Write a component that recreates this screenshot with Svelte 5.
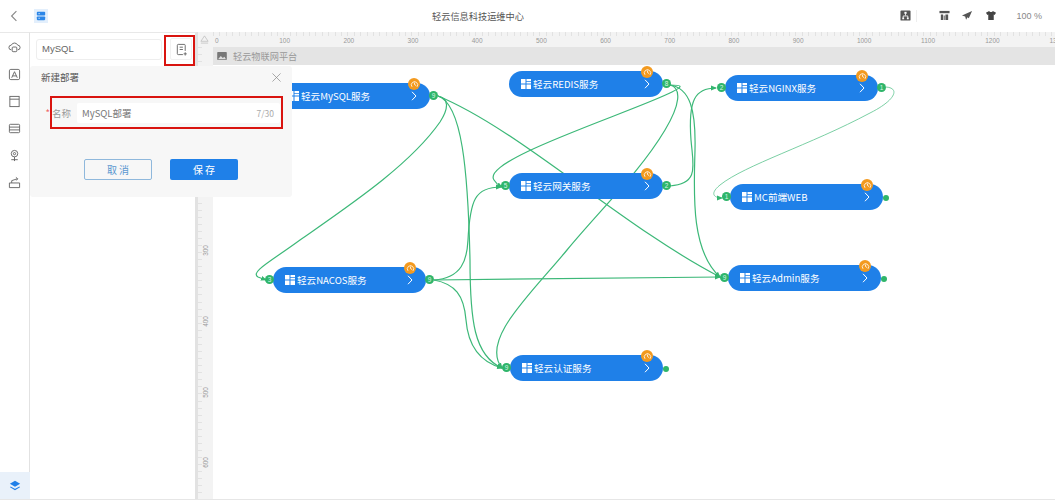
<script lang="ts">
	// page coordinates, the workspace svg uses the same ones through its viewBox
	const ORIGIN = { x: 198, y: 32 };
	const services = [
		{ name: '轻云MySQL服务', x: 277, y: 83, w: 153, inPort: null, outPort: '9' },
		{ name: '轻云REDIS服务', x: 509, y: 71, w: 154, inPort: null, outPort: '8' },
		{ name: '轻云NGINX服务', x: 725, y: 75, w: 153, inPort: '2', outPort: '1' },
		{ name: '轻云网关服务', x: 509, y: 173, w: 154, inPort: '5', outPort: '2' },
		{ name: 'MC前端WEB', x: 730, y: 184, w: 153, inPort: '1', outPort: '' },
		{ name: '轻云NACOS服务', x: 273, y: 267, w: 153, inPort: '3', outPort: '9' },
		{ name: '轻云Admin服务', x: 728, y: 265, w: 153, inPort: '9', outPort: '' },
		{ name: '轻云认证服务', x: 510, y: 355, w: 153, inPort: '9', outPort: '' }
	];
	const edges = [
		{ d: 'M438 96 C449 98 449 108 440 122 C410 165 350 205 300 240 C270 262 250 272 258 277 L266 280' },
		{ d: 'M438 96 C462 104 468 170 470 260 C470 320 474 356 502 368' },
		{ d: 'M438 96 C520 130 620 225 720 277' },
		{ d: 'M434 280 C462 278 467 260 468 240 C470 200 475 187 501 187' },
		{ d: 'M434 280 L720 277' },
		{ d: 'M434 280 C455 284 464 295 466 320 C468 345 480 362 502 368' },
		{ d: 'M670 85 C682 85 684 86 672 92 C630 113 480 160 494 180 C497 185 500 186 502 187' },
		{ d: 'M670 85 C682 88 680 105 665 130 C640 172 600 210 567 250 C530 295 480 340 502 368' },
		{ d: 'M670 85 C690 88 696 110 695 150 C694 190 690 250 720 277' },
		{ d: 'M670 186 C700 184 693 165 691 140 C688 100 695 88 716 88' },
		{ d: 'M886 87 C900 88 896 100 870 113 C810 145 745 165 720 185 C708 195 716 198 722 198', thin: true }
	];
	const ticksX = Array.from({ length: 14 }, (_, i) => i * 100);
	const ticksY = [100, 200, 300, 400, 500, 600];
</script>

<div class="app">
	<header class="topbar">
		<svg class="back" viewBox="0 0 10 14" width="8" height="12"><path d="M8 1 2 7l6 6" fill="none" stroke="#888" stroke-width="1.4" /></svg>
		<span class="logo">
			<svg viewBox="0 0 12 12" width="10" height="10"><rect x="1" y="1" width="10" height="4.5" rx="1" fill="#2b86e8" /><rect x="1" y="6.5" width="10" height="4.5" rx="1" fill="#2b86e8" /><path d="M3 3.2h1.5M3 8.7h1.5" stroke="#fff" /></svg>
		</span>
		<h1>轻云信息科技运维中心</h1>
		<div class="tools">
			<svg viewBox="0 0 12 12" width="11" height="11"><rect x="0.5" y="0.5" width="11" height="11" rx="1" fill="#555" /><path d="M6 4v2M3.500 9V6.500h5V9" fill="none" stroke="#fff" stroke-width=".9" /><rect x="4.800" y="2" width="2.400" height="2.200" fill="#fff" /><rect x="2.500" y="8.300" width="2" height="1.800" fill="#fff" /><rect x="7.500" y="8.300" width="2" height="1.800" fill="#fff" /></svg>
			<i class="divider"></i>
			<svg viewBox="0 0 12 12" width="11" height="11"><path d="M.5 1h11v2.500H.5z" fill="#555" /><path d="M2 5h2.500v6H2zM7 5h3v6H7z" fill="#555" /><path d="M5 6h1.500v5H5z" fill="#888" /></svg>
			<svg viewBox="0 0 12 12" width="12" height="11"><path d="M11.500 1 .5 6l3.500 1 1 3.500 1.500-2.500 1.500 1z" fill="#555" /></svg>
			<svg viewBox="0 0 12 12" width="12" height="11"><path d="M4 1 .5 3 2 5.500l1-.5v6h6V5l1 .5L11.500 3 8 1C7.500 2.500 4.500 2.500 4 1z" fill="#444" /></svg>
			<span class="zoom">100 %</span>
		</div>
	</header>

	<div class="body">
		<nav class="rail">
			<div class="rail__items">
				<svg viewBox="0 0 14 14" width="13" height="13"><path d="M3.500 9.500a2.500 2.500 0 0 1 0-5 3.800 3.800 0 0 1 7 0 2.500 2.500 0 0 1 0 5" fill="none" /><rect x="4.500" y="6.500" width="5" height="5" rx="1" fill="none" /></svg>
				<svg viewBox="0 0 14 14" width="13" height="13"><rect x="1.500" y="1.500" width="11" height="11" rx="1.500" fill="none" /><path d="M4 10.500 7 4l3 6.500M5 8.500h4" fill="none" /></svg>
				<svg viewBox="0 0 14 14" width="13" height="13"><rect x="2" y="1.500" width="10" height="11" fill="none" /><path d="M2 4.500h10" fill="none" /></svg>
				<svg viewBox="0 0 14 14" width="13" height="13"><rect x="1.500" y="2.500" width="11" height="9" rx="1" fill="none" /><path d="M1.500 5.500h11M1.500 8.500h11" fill="none" /></svg>
				<svg viewBox="0 0 14 14" width="13" height="13"><circle cx="7" cy="5" r="3.500" fill="none" /><circle cx="7" cy="5" r="1.200" fill="none" /><path d="M7 8.500V13M3.500 11.500h7" fill="none" /></svg>
				<svg viewBox="0 0 14 14" width="13" height="13"><path d="M1.500 7.500h11v5h-11zM4 7.500V5l6-2M8.500 1.500 10.500 3 9 4.800" fill="none" /></svg>
			</div>
			<div class="rail__active">
				<svg viewBox="0 0 14 14" width="12" height="12"><path d="M7 1 13 4.500 7 8 1 4.500z" fill="#1f7fe8" /><path d="M1.500 8 7 11.200 12.500 8" fill="none" stroke="#1f7fe8" stroke-width="1.300" /></svg>
			</div>
		</nav>

		<aside class="panel">
			<div class="search">
				<div class="search__input">MySQL</div>
				<button class="add" aria-label="新建部署">
					<svg viewBox="0 0 14 14" width="13" height="13"><path d="M8.500 12.500H3.500a1 1 0 0 1-1-1v-9a1 1 0 0 1 1-1h6.500a1 1 0 0 1 1 1v6M5 4.500h3.500M5 7h3.500M11 10v3.500M9.300 11.700h3.400" fill="none" stroke="#666" /></svg>
				</button>
			</div>
		</aside>

		<main class="workspace">
			<div class="ruler-x">
				<span class="corner">
					<svg viewBox="0 0 10 10" width="9" height="9"><path d="M5 1 9 7H1zM1 9h8" fill="none" stroke="#bbb" stroke-width=".8" /></svg>
				</span>
				{#each ticksX as t}
					<span class="tick-x">{t}</span>
				{/each}
			</div>
			<div class="stage">
				<div class="ruler-y">
					{#each ticksY as t}
						<span class="tick-y"><b>{t}</b></span>
					{/each}
				</div>
				<div class="canvas">
					<div class="canvas__title">
						<svg viewBox="0 0 12 10" width="10" height="8"><rect width="12" height="10" rx="1" fill="#777" /><path d="M1 9 4.500 5l2.500 2.500 2-1.500 2 3z" fill="#ddd" /></svg>
						轻云物联网平台
					</div>
				</div>
			</div>

			<svg class="edges" viewBox="{ORIGIN.x} {ORIGIN.y} 857 468">
				<defs>
					<marker id="arrow" markerWidth="6" markerHeight="6" refX="5" refY="3" orient="auto" markerUnits="userSpaceOnUse">
						<path d="M0 .5 6 3 0 5.500z" fill="#35b56f" />
					</marker>
				</defs>
				{#each edges as e}
					<path d={e.d} class:thin={e.thin} marker-end="url(#arrow)" />
				{/each}
			</svg>

			{#each services as s}
				<div class="node" style="left: {s.x - ORIGIN.x}px; top: {s.y - ORIGIN.y}px; width: {s.w}px">
					<svg class="node__icon" viewBox="0 0 10 10" width="10" height="10"><path d="M0 0h4.500v4.500H0zM5.500 0H10v2.200H5.500zM5.500 3H10v1.500H5.500zM0 5.500h4.500V10H0zM5.500 5.500H10V10H5.500z" fill="#fff" /></svg>
					<span class="node__name">{s.name}</span>
					<svg class="node__chevron" viewBox="0 0 6 10" width="6" height="10"><path d="M1 .8 5 5 1 9.200" fill="none" stroke="#fff" stroke-width="1" /></svg>
					<span class="clock">
						<svg viewBox="0 0 10 10" width="9" height="9"><path d="M2.200 7.500A3.500 3.500 0 1 1 7.800 7.500M5 2.800V5l1.800 1.200" fill="none" stroke="#fff" stroke-width=".9" /></svg>
					</span>
					{#if s.inPort !== null}
						<span class="port port--in">{s.inPort}</span>
					{/if}
					{#if s.outPort !== null}
						<span class="port port--out" class:port--plain={s.outPort === ''}>{s.outPort}</span>
					{/if}
				</div>
			{/each}
		</main>

		<section class="dialog">
			<div class="dialog__head">
				<span>新建部署</span>
				<svg viewBox="0 0 10 10" width="9" height="9"><path d="M.5.5l9 9M9.500.5l-9 9" stroke="#888" stroke-width=".8" /></svg>
			</div>
			<div class="field">
				<label for="deploy-name"><em>*</em> 名称</label>
				<div class="field__input" id="deploy-name">
					<span>MySQL部署</span>
					<small>7/30</small>
				</div>
			</div>
			<div class="dialog__actions">
				<button class="btn btn--ghost">取 消</button>
				<button class="btn btn--primary">保 存</button>
			</div>
		</section>

		<i class="mark mark--add"></i>
		<i class="mark mark--field"></i>
	</div>
</div>

<style>
	:global(body) {
		margin: 0;
		background: #fff;
	}

	.app {
		width: 1055px;
		height: 500px;
		overflow: hidden;
		display: flex;
		flex-direction: column;
		font-family: "Noto Sans CJK SC", "Liberation Sans", sans-serif;
		color: #666;
	}

	.topbar {
		height: 32px;
		flex: none;
		display: flex;
		align-items: center;
		padding: 0 0 1px 10px;
		box-sizing: border-box;
		position: relative;
		background: #fff;
	}

	.logo {
		margin-left: 16px;
		width: 14px;
		height: 14px;
		display: flex;
		align-items: center;
		justify-content: center;
		background: #e3effc;
	}

	.topbar h1 {
		position: absolute;
		left: 0;
		width: 956px;
		margin: 0;
		text-align: center;
		font-size: 9.2px;
		font-weight: 400;
		color: #555;
	}

	.tools {
		margin-left: auto;
		display: flex;
		align-items: center;
		gap: 11.5px;
		padding-right: 13px;
	}

	.divider {
		width: 1px;
		height: 12px;
		margin: 0 10px 0 -6px;
		background: #eee;
	}

	.zoom {
		margin-left: 8px;
		font-family: "Liberation Sans", sans-serif;
		font-size: 9px;
		color: #888;
	}

	.body {
		flex: 1;
		display: flex;
		position: relative;
		min-height: 0;
		border-bottom: 1px solid #e6e6e6;
	}

	.rail {
		width: 30px;
		flex: none;
		box-sizing: border-box;
		border-right: 1px solid #e2e2e2;
		border-top: 1px solid #e8e8e8;
		display: flex;
		flex-direction: column;
		justify-content: space-between;
	}

	.rail__items {
		display: flex;
		flex-direction: column;
		align-items: center;
		gap: 14px;
		padding-top: 8px;
	}

	.rail__items svg {
		stroke: #666;
		stroke-width: 1;
	}

	.rail__active {
		height: 27px;
		margin-right: -1px;
		background: #e9f1fa;
		display: flex;
		align-items: center;
		justify-content: center;
	}

	.panel {
		width: 168px;
		flex: none;
		box-sizing: border-box;
		border-top: 1px solid #e8e8e8;
		border-right: 3px solid #e2e2e2;
	}

	.search {
		display: flex;
		align-items: center;
		gap: 8px;
		padding: 5px 0 0 6px;
	}

	.search__input {
		width: 126px;
		height: 21px;
		box-sizing: border-box;
		padding-left: 5px;
		border: 1px solid #eee;
		border-radius: 3px;
		font-size: 9.5px;
		line-height: 17px;
		font-family: "Liberation Sans", sans-serif;
		color: #666;
	}

	.add {
		width: 22px;
		height: 22px;
		padding: 0;
		display: flex;
		align-items: center;
		justify-content: center;
		border: 1px solid #f1f1f1;
		border-radius: 2px;
		background: #fff;
	}

	.workspace {
		flex: 1;
		position: relative;
		min-width: 0;
		display: flex;
		flex-direction: column;
	}

	.ruler-x {
		height: 15px;
		flex: none;
		display: flex;
		background:
			repeating-linear-gradient(90deg, #e2e2e2 0 1px, transparent 1px 6.4px) 15px 0 / 100% 4px no-repeat,
			#f3f3f3;
	}

	.corner {
		width: 15px;
		flex: none;
		padding-left: 2px;
		box-sizing: border-box;
		line-height: 10px;
	}

	.tick-x {
		width: 64.2px;
		flex: none;
		box-sizing: border-box;
		padding: 4px 0 0 2px;
		font-size: 6.5px;
		line-height: 10px;
		color: #999;
		font-family: "Liberation Sans", sans-serif;
	}

	.stage {
		flex: 1;
		display: flex;
		min-height: 0;
	}

	.ruler-y {
		width: 15px;
		flex: none;
		display: flex;
		flex-direction: column;
		box-sizing: border-box;
		background:
			repeating-linear-gradient(180deg, #e2e2e2 0 1px, transparent 1px 7.07px) 0 0 / 4px 100% no-repeat,
			#f3f3f3;
	}

	.tick-y {
		height: 70.7px;
		flex: none;
		display: flex;
		align-items: flex-end;
		justify-content: center;
	}

	.tick-y b {
		writing-mode: vertical-rl;
		transform: rotate(180deg);
		font-weight: 400;
		font-size: 6.5px;
		line-height: 10px;
		margin-bottom: 3px;
		color: #999;
		font-family: "Liberation Sans", sans-serif;
	}

	.canvas {
		flex: 1;
		min-width: 0;
	}

	.canvas__title {
		height: 18px;
		display: flex;
		align-items: center;
		gap: 6px;
		padding-left: 4px;
		background: #e4e4e4;
		font-size: 9.2px;
		color: #999;
	}

	.edges {
		position: absolute;
		inset: 0;
		width: 857px;
		height: 468px;
		pointer-events: none;
	}

	.edges path {
		fill: none;
		stroke: #3cb878;
		stroke-width: 1.2;
	}

	.edges path.thin {
		stroke: #6cc99a;
		stroke-width: 0.9;
	}

	.edges marker path {
		stroke: none;
		fill: #35b56f;
	}

	.node {
		position: absolute;
		height: 26px;
		display: flex;
		align-items: center;
		box-sizing: border-box;
		padding: 0 13px 0 12px;
		border-radius: 13px;
		background: #1f80e8;
		color: #fff;
	}

	.node__icon {
		flex: none;
	}

	.node__name {
		margin-left: 2px;
		font-size: 9.6px;
		white-space: nowrap;
	}

	.node__chevron {
		margin-left: auto;
	}

	.clock {
		position: absolute;
		right: 10px;
		top: -5px;
		width: 12px;
		height: 12px;
		border-radius: 50%;
		background: #f39a1f;
		display: flex;
		align-items: center;
		justify-content: center;
	}

	.port {
		position: absolute;
		top: 8px;
		width: 9px;
		height: 9px;
		border-radius: 50%;
		background: #2fb56a;
		color: #d8f5e4;
		font-size: 6.5px;
		line-height: 9px;
		text-align: center;
		font-family: "Liberation Sans", sans-serif;
	}

	.port--in {
		left: -8px;
	}

	.port--out {
		right: -8px;
	}

	.port--plain {
		width: 6px;
		height: 6px;
		top: 11px;
		right: -6px;
	}

	.dialog {
		position: absolute;
		left: 30px;
		top: 34px;
		width: 262px;
		height: 131px;
		box-sizing: border-box;
		padding: 0 11px;
		background: #f7f7f7;
		border-radius: 3px;
	}

	.dialog__head {
		display: flex;
		align-items: center;
		justify-content: space-between;
		height: 22px;
		font-size: 9.5px;
		color: #555;
	}

	.field {
		margin-top: 15px;
		display: flex;
		align-items: center;
		gap: 6px;
	}

	.field label {
		width: 30px;
		flex: none;
		text-align: right;
		font-size: 9.5px;
		color: #999;
	}

	.field em {
		font-style: normal;
		color: #e66;
	}

	.field__input {
		width: 203px;
		height: 20px;
		box-sizing: border-box;
		padding: 0 6px 0 5px;
		display: flex;
		align-items: center;
		justify-content: space-between;
		background: #fff;
		border-radius: 2px;
		font-size: 9.5px;
		color: #777;
	}

	.field__input small {
		font-size: 8.5px;
		color: #aaa;
	}

	.dialog__actions {
		margin-top: 36px;
		padding-left: 43px;
		display: flex;
		gap: 18px;
	}

	.btn {
		width: 68px;
		height: 21px;
		padding: 0;
		border-radius: 2px;
		font: inherit;
		font-size: 10px;
	}

	.btn--ghost {
		border: 1px solid #8fb8dc;
		background: #f7f7f7;
		color: #5a96cf;
	}

	.btn--primary {
		border: 0;
		background: #1f80e8;
		color: #fff;
	}

	.mark {
		position: absolute;
		box-sizing: border-box;
		border: 2px solid #d9140f;
		pointer-events: none;
	}

	.mark--add {
		left: 164px;
		top: 3px;
		width: 31px;
		height: 31px;
	}

	.mark--field {
		left: 50px;
		top: 64px;
		width: 233px;
		height: 33px;
	}
</style>
